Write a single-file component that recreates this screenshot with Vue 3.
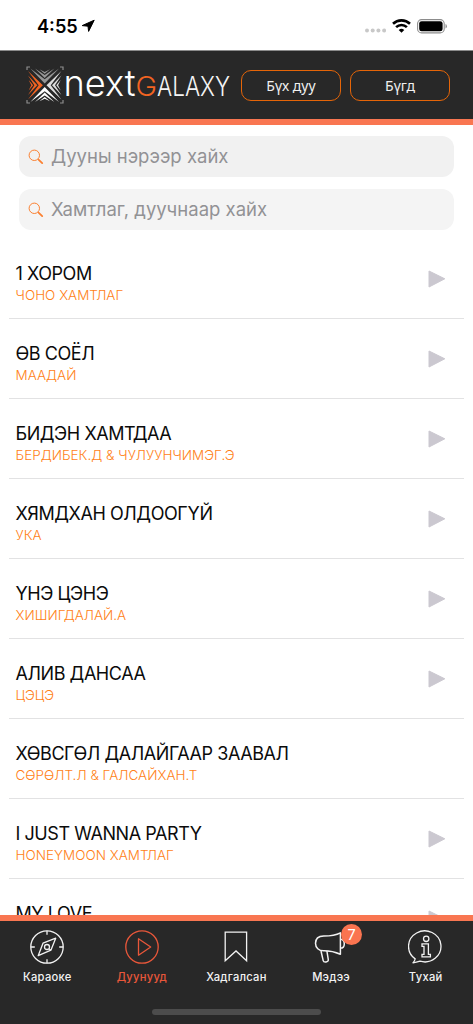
<template>
  <div class="screen">
    <div class="status-bar">
      <div class="clock">
        <span class="clock-time">4:55</span>
        <svg class="location" width="14" height="14" viewBox="0 0 14 14">
          <path d="M13.2 1.2 7.6 12.4 7 7.2 1.2 6.6z" fill="#000" stroke="#000" stroke-linejoin="round" />
        </svg>
      </div>
      <div class="indicators">
        <svg width="22" height="5" viewBox="0 0 22 5" fill="#c8c8c8" class="signal">
          <circle v-for="n in 4" :key="n" :cx="n * 5.7 - 2.7" cy="2.5" r="2" />
        </svg>
        <svg width="19" height="14" viewBox="0 0 19 14" class="wifi">
          <g fill="none" stroke="#000" stroke-width="2.6">
            <path d="M1 4.8a12.2 12.2 0 0 1 17 0" />
            <path d="M4.1 8.1a7.8 7.8 0 0 1 10.8 0" />
          </g>
          <path d="M9.5 13.7 6.7 11a4 4 0 0 1 5.6 0z" />
        </svg>
        <svg width="31" height="15" viewBox="0 0 31 15" class="battery">
          <rect x=".6" y=".6" width="26.6" height="13.3" rx="4" fill="none" stroke="#8c8c8c" stroke-width="1.1" />
          <rect x="2.2" y="2.2" width="23.4" height="10.1" rx="2.4" />
          <path d="M28.5 5v4.6q1.4-.6 1.4-2.3T28.5 5z" fill="#8c8c8c" />
        </svg>
      </div>
    </div>

    <header class="header">
      <svg class="logo" width="208" height="53" viewBox="0 0 208 53">
        <g fill="none" stroke="#8d8d8d" stroke-width="1.2">
          <path d="M1 4V1h3M34 1h3v3M37 34v3h-3M4 37H1v-3" />
        </g>
        <g transform="translate(18.7 19.3)">
          <g
            v-for="arm in logoArms"
            :key="arm.angle"
            :transform="`rotate(${arm.angle})`"
            :fill="arm.color"
          >
            <path d="M0-1.8-14.3-16.7 0-6 14.3-16.7z" />
            <path d="M0-7.3-9.7-16.7 0-10.3 9.7-16.7z" />
            <path d="M0-11.6-5.3-16 0-13.4 5.3-16z" />
          </g>
        </g>
        <text class="logo-next" x="37.5" y="29.5" textLength="72" lengthAdjust="spacingAndGlyphs">next</text>
        <text class="logo-g" x="109.5" y="29.5" textLength="21.5" lengthAdjust="spacingAndGlyphs">G</text>
        <text class="logo-alaxy" x="131" y="29.5" textLength="73" lengthAdjust="spacingAndGlyphs">ALAXY</text>
      </svg>
      <button class="filter-btn">Бүх дуу</button>
      <button class="filter-btn">Бүгд</button>
    </header>

    <div class="search-area">
      <div v-for="(text, i) in searches" :key="text" :class="['search', { light: i === 1 }]">
        <svg width="16" height="16" viewBox="0 0 16 16" fill="none" stroke="#fb8132">
          <circle cx="6.3" cy="6.3" r="5.2" stroke-width="1" />
          <path d="m10 10 .9.9" />
          <path d="m10.8 10.8 3.4 3.3" stroke-width="1.8" stroke-linecap="round" />
        </svg>
        <span>{{ text }}</span>
      </div>
    </div>

    <main class="song-list">
      <div v-for="song in songs" :key="song.title" class="song">
        <div class="song-info">
          <div class="song-title">{{ song.title }}</div>
          <div class="song-artist">{{ song.artist }}</div>
        </div>
        <svg v-if="song.playable" width="18" height="18" viewBox="0 0 18 18">
          <path d="M1 1 16.8 8.8 1 17z" fill="#cbc8d0" stroke="#cbc8d0" stroke-linejoin="round" />
        </svg>
      </div>
    </main>

    <nav class="tab-bar">
      <div class="tabs">
        <div v-for="tab in tabs" :key="tab.id" :class="['tab', { active: tab.id === 'songs' }]">
          <div class="tab-icon">
            <svg
              width="36"
              height="36"
              viewBox="0 0 36 36"
              fill="none"
              stroke="currentColor"
              stroke-width="1.3"
            >
              <template v-if="tab.id === 'karaoke'">
                <circle cx="18" cy="18" r="16.2" />
                <path d="M18 1.8v4M18 30.2v4M1.8 18h4M30.2 18h4" />
                <path d="M26.7 9.2 22 21.1 9.2 26.7 14 14.2z" stroke-linejoin="round" />
                <circle cx="18" cy="18" r="2.5" />
                <path d="m20 20 2 1.1" />
              </template>
              <template v-else-if="tab.id === 'songs'">
                <circle cx="18" cy="18" r="16.2" />
                <path d="M14.5 9.8v16.4L26.7 18z" stroke-linejoin="round" />
              </template>
              <path v-else-if="tab.id === 'saved'" d="M7.2 3.2h21.4v28.6L18 22 7.2 31.8z" />
              <template v-else-if="tab.id === 'news'">
                <path
                  d="M27.4 3.8c-5.5 3-10.5 3.2-16.7 3.2-5.1.1-8.2 2.9-8.2 7.3s3.3 7.5 8.1 7.5c6.6-.1 11.2 1 16.8 3.5z"
                  stroke-width="1.5"
                  stroke-linejoin="round"
                />
                <path d="M27.4 10.3c5.2-.2 5.2 8.8 0 8.8M8 22l2.2 9.6c.5 2.2 5.5 1.8 5.1-.9L13.9 22" stroke-width="1.5" />
              </template>
              <template v-else>
                <path
                  d="M7.2 29.9A16.2 15.5 0 1 1 12 32.2c-2 .7-4.4 1.4-7 1.6 1.3-1.1 1.8-2.5 2.2-3.9z"
                  stroke-linejoin="round"
                />
                <circle cx="18.2" cy="9.8" r="2.7" />
                <path d="M14 14.9h6.4v10.5h2v2.5H14v-2.5h2v-8h-2z" />
              </template>
            </svg>
            <span v-if="tab.badge" class="badge">{{ tab.badge }}</span>
          </div>
          <span class="tab-label">{{ tab.label }}</span>
        </div>
      </div>
      <div class="home-indicator"></div>
    </nav>
  </div>
</template>

<script setup>
const logoArms = [
  { angle: 0, color: "#969696" },
  { angle: 90, color: "#dedede" },
  { angle: 180, color: "#ffffff" },
  { angle: 270, color: "#f26422" },
];

const searches = ["Дууны нэрээр хайх", "Хамтлаг, дуучнаар хайх"];

const songs = [
  { title: "1 ХОРОМ", artist: "ЧОНО ХАМТЛАГ", playable: true },
  { title: "ӨВ СОЁЛ", artist: "МААДАЙ", playable: true },
  { title: "БИДЭН ХАМТДАА", artist: "БЕРДИБЕК.Д & ЧУЛУУНЧИМЭГ.Э", playable: true },
  { title: "ХЯМДХАН ОЛДООГҮЙ", artist: "УКА", playable: true },
  { title: "ҮНЭ ЦЭНЭ", artist: "ХИШИГДАЛАЙ.А", playable: true },
  { title: "АЛИВ ДАНСАА", artist: "ЦЭЦЭ", playable: true },
  { title: "ХӨВСГӨЛ ДАЛАЙГААР ЗААВАЛ", artist: "СӨРӨЛТ.Л & ГАЛСАЙХАН.Т", playable: false },
  { title: "I JUST WANNA PARTY", artist: "HONEYMOON ХАМТЛАГ", playable: true },
  { title: "MY LOVE", artist: "", playable: true },
];

const tabs = [
  { id: "karaoke", label: "Караоке" },
  { id: "songs", label: "Дуунууд" },
  { id: "saved", label: "Хадгалсан" },
  { id: "news", label: "Мэдээ", badge: 7 },
  { id: "about", label: "Тухай" },
];
</script>

<style>
body {
  margin: 0;
}
</style>

<style scoped>
.screen {
  width: 473px;
  height: 1024px;
  display: flex;
  flex-direction: column;
  overflow: hidden;
  background: #fff;
  font-family: Inter, "Liberation Sans", sans-serif;
}
.screen * {
  box-sizing: border-box;
}
svg {
  display: block;
  flex-shrink: 0;
}
.status-bar {
  height: 51px;
  flex-shrink: 0;
  display: flex;
  justify-content: space-between;
  border-bottom: 1px solid #8b8b8b;
  padding: 0 25px 0 37px;
}
.clock {
  display: flex;
  padding-top: 14px;
  gap: 3px;
}
.clock-time {
  font-size: 18.2px;
  line-height: 24px;
  font-weight: 600;
}
.location {
  margin-top: 5px;
}
.indicators {
  display: flex;
  padding-top: 19px;
}
.signal {
  margin: 9px 6px 0 0;
}
.battery {
  margin-left: 6px;
}
.header {
  height: 74px;
  flex-shrink: 0;
  display: flex;
  align-items: flex-start;
  background: #282828;
  border-bottom: 6px solid #f97651;
  padding: 15px 0 0 26px;
}
.logo {
  overflow: visible;
}
.logo-next {
  font-size: 37px;
  font-weight: 300;
  fill: #fff;
}
.logo-g,
.logo-alaxy {
  font-size: 27.5px;
  font-weight: 300;
  fill: #f4f4f4;
}
.logo-g {
  fill: #f26422;
}
.filter-btn {
  width: 100px;
  height: 31px;
  margin: 4px 0 0 7px;
  padding: 0;
  border: 1px solid #e56508;
  border-radius: 10px;
  background: transparent;
  color: #f0f0f0;
  font-family: "Noto Sans", sans-serif;
  font-size: 14px;
  line-height: 29px;
}
.filter-btn:last-child {
  margin-left: 9px;
}
.search-area {
  flex-shrink: 0;
  display: flex;
  flex-direction: column;
  gap: 12px;
  padding: 11px 19px 9px;
}
.search {
  height: 41px;
  display: flex;
  align-items: center;
  gap: 7px;
  padding-left: 9px;
  border-radius: 12px;
  background: #f1f1f1;
  color: #929295;
  font-size: 18.5px;
}
.search span {
  padding-bottom: 2px;
}
.search.light {
  background: #f4f4f4;
}
.song-list {
  flex: 1;
  min-height: 0;
  overflow: hidden;
  padding: 0 9px;
}
.song {
  height: 80px;
  display: flex;
  justify-content: space-between;
  border-bottom: 1px solid #e2e2e3;
  padding: 23px 18px 0 6.5px;
}
.song svg {
  margin-top: 8px;
}
.song-title {
  font-size: 18px;
  line-height: 24px;
  letter-spacing: -0.44px;
  color: #0b0b0b;
  white-space: nowrap;
}
.song-artist {
  margin-top: -1px;
  font-size: 13.5px;
  font-weight: 300;
  line-height: 20px;
  color: #ff7f17;
  white-space: nowrap;
}
.tab-bar {
  height: 109px;
  flex-shrink: 0;
  border-top: 6px solid #f97651;
  background: #282828;
  color: #f2f2f2;
}
.tabs {
  height: 88px;
  display: grid;
  grid-template-columns: repeat(5, 94.6px);
}
.tab {
  display: flex;
  flex-direction: column;
  align-items: center;
  padding-top: 8px;
}
.tab.active {
  color: #e9573a;
}
.tab-icon {
  position: relative;
}
.tab-label {
  margin-top: 4px;
  font-size: 11.2px;
  line-height: 16px;
  font-weight: 500;
  letter-spacing: 0.25px;
}
.badge {
  position: absolute;
  top: -5px;
  left: 28px;
  width: 21px;
  height: 21px;
  border-radius: 50%;
  background: #fa7450;
  color: #fff;
  font-size: 14.5px;
  line-height: 21px;
  text-align: center;
}
.home-indicator {
  width: 169px;
  height: 6px;
  margin: 0 auto;
  border-radius: 3px;
  background: #4c4c4c;
}
</style>
